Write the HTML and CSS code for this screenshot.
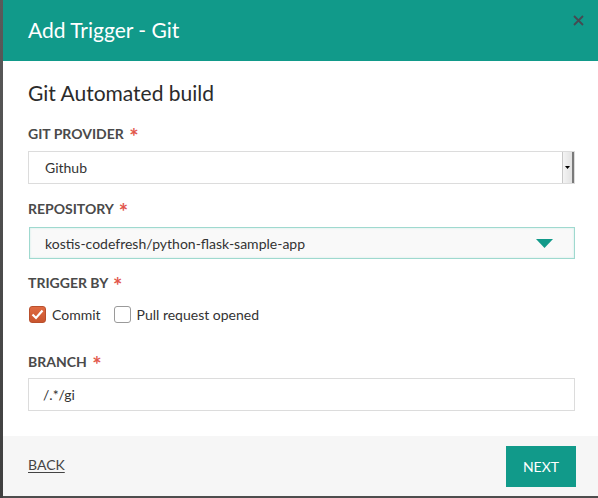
FILE: index.html
```html
<!DOCTYPE html>
<html>
<head>
<meta charset="utf-8">
<link rel="stylesheet" href="styles.css">
</head>
<body>
<div class="page">
  <div class="backdrop"></div>
  <div class="modal">
    <div class="modal-header">
      <h1 class="modal-title">Add Trigger - Git</h1>
      <svg class="close" width="11" height="11" viewBox="0 0 11 11"><path d="M1 1L10 10M10 1L1 10" stroke="#464a52" stroke-width="1.8" fill="none"/></svg>
    </div>
    <div class="modal-body">
      <h2 class="section-title">Git Automated build</h2>

      <div class="label lbl-provider">GIT PROVIDER <span class="req">*</span></div>
      <div class="field select-native">
        <span class="field-text">Github</span>
        <span class="native-arrow"><svg width="5" height="3" viewBox="0 0 5 3"><path d="M0 0H5L2.5 3Z" fill="#000"/></svg></span>
      </div>

      <div class="label lbl-repo">REPOSITORY <span class="req">*</span></div>
      <div class="field select-repo">
        <span class="field-text">kostis-codefresh/python-flask-sample-app</span>
        <svg class="caret" width="17" height="9" viewBox="0 0 17 9"><path d="M0 0H17L8.5 9Z" fill="#129a8a"/></svg>
      </div>

      <div class="label lbl-trigger">TRIGGER BY <span class="req">*</span></div>
      <div class="checks">
        <label class="check">
          <span class="box checked"><svg width="13" height="11" viewBox="0 0 13 11"><path d="M1.5 5.5L5 9L11.5 1.5" fill="none" stroke="#fff" stroke-width="2.2"/></svg></span>
          <span class="check-text">Commit</span>
        </label>
        <label class="check">
          <span class="box"></span>
          <span class="check-text">Pull request opened</span>
        </label>
      </div>

      <div class="label lbl-branch">BRANCH <span class="req">*</span></div>
      <div class="field input-branch">
        <span class="field-text branch-text">/.*/gi</span>
      </div>
    </div>
    <div class="modal-footer">
      <a class="back">BACK</a>
      <button class="next">NEXT</button>
    </div>
  </div>
</div>
</body>
</html>
```
FILE: styles.css
```css
html, body {
  margin: 0;
  padding: 0;
}
body {
  font-family: Lato, "Liberation Sans", sans-serif;
  background: #4d4d4d;
}
.page {
  display: flex;
  width: 598px;
  height: 498px;
  overflow: hidden;
}
.backdrop {
  width: 3px;
  flex: none;
  background: linear-gradient(#5a5a5a, #3f3f3f);
}
.modal {
  width: 595px;
  height: 496px;
  display: flex;
  flex-direction: column;
  background: #fff;
  position: relative;
}
.modal-header {
  height: 61px;
  flex: none;
  background: #119a8a;
  display: flex;
  align-items: center;
  padding-left: 25px;
  box-sizing: border-box;
}
.modal-title {
  margin: 0;
  font-weight: 400;
  font-size: 21px;
  color: #fff;
  padding-bottom: 2px;
}
.close {
  position: absolute;
  top: 15px;
  left: 570px;
}
.modal-body {
  flex: 1;
  padding: 0 23px 0 25px;
}
.section-title {
  margin: 20px 0 0;
  font-weight: 400;
  font-size: 21px;
  line-height: 24px;
  color: #2b2b2b;
}
.label {
  font-size: 14px;
  font-weight: 700;
  color: #4a4a4a;
  line-height: 18px;
  height: 18px;
}
.req {
  color: #e2574c;
  font-weight: 700;
  font-size: 22px;
  line-height: 0;
  margin-left: 2px;
  vertical-align: -6px;
}
.lbl-provider { margin-top: 20px; }
.lbl-repo { margin-top: 16px; }
.lbl-trigger { margin-top: 15px; }
.lbl-branch { margin-top: 30px; }
.field {
  box-sizing: border-box;
  height: 33px;
  border: 1px solid #dcdcdc;
  display: flex;
  align-items: center;
  font-size: 14px;
  color: #333;
  position: relative;
}
.select-native {
  margin-top: 8px;
  padding-left: 16px;
}
.field-text { flex: 1; }
.native-arrow {
  align-self: stretch;
  width: 9px;
  background: linear-gradient(90deg, #f4f4f4, #e2e2e2);
  border-left: 1px solid #c8c8c8;
  border-right: 2px solid #7a7a7a;
  display: flex;
  align-items: center;
  justify-content: center;
}
.select-repo {
  margin-top: 9px;
  margin-left: 1px;
  height: 32px;
  background: #f9f9f9;
  border: 1px solid #9fd9cf;
  box-shadow: inset 0 0 2px #c4ebe4;
  padding-left: 15px;
  padding-right: 21px;
}
.caret { flex: none; }
.checks {
  display: flex;
  gap: 13px;
  margin-top: 14px;
  margin-left: 1px;
}
.check {
  display: flex;
  align-items: center;
  gap: 6px;
  font-size: 14px;
  color: #333;
}
.box {
  width: 17px;
  height: 17px;
  box-sizing: border-box;
  border: 1px solid #9a9a9a;
  border-radius: 3px;
  background: #fff;
  display: flex;
  align-items: center;
  justify-content: center;
}
.box.checked {
  background: linear-gradient(#e06b42, #c9552e);
  border-color: #b9502d;
}
.input-branch {
  margin-top: 7px;
  padding-left: 14px;
}
.modal-footer {
  height: 60px;
  flex: none;
  background: #f6f6f6;
  display: flex;
  align-items: center;
  justify-content: space-between;
  padding: 0 22px 0 25px;
}
.back {
  font-size: 14px;
  color: #444;
  text-decoration: underline;
  text-underline-offset: 2px;
  margin-bottom: 3px;
}
.next {
  width: 70px;
  height: 41px;
  border: none;
  background: #119a8a;
  color: #fff;
  font-family: Lato, "Liberation Sans", sans-serif;
  font-size: 14px;
  padding: 0;
  margin-top: 1px;
}
```
